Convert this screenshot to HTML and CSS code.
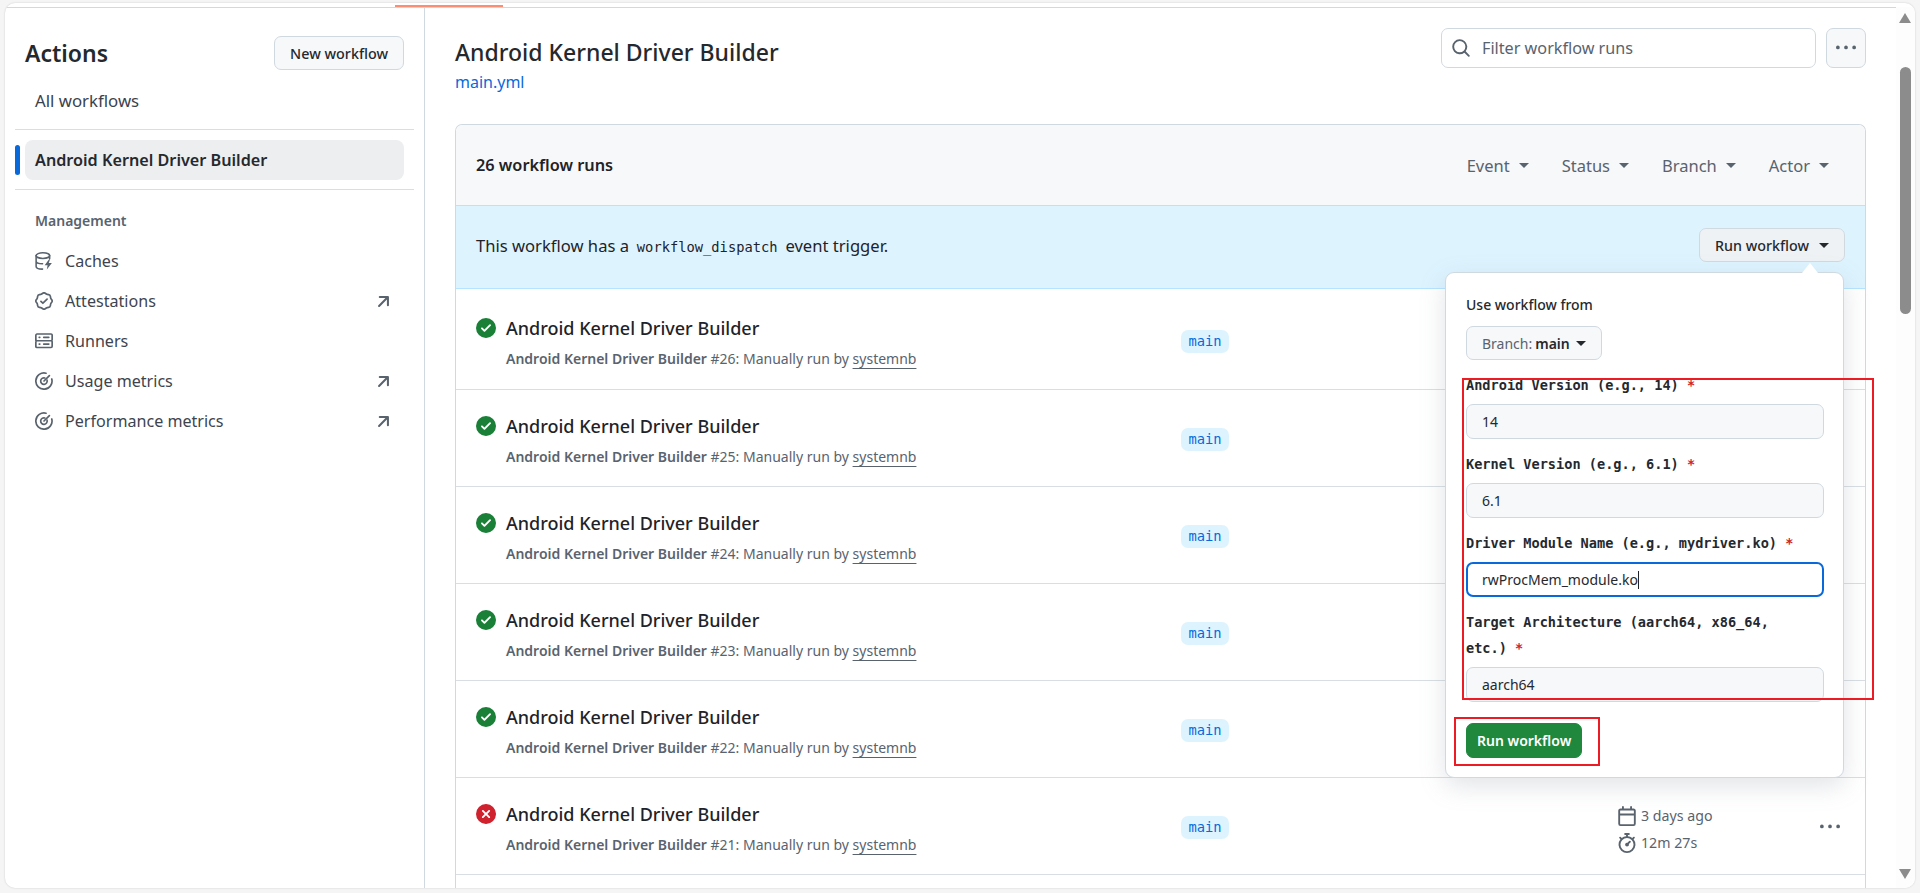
FILE: index.html
```html
<!DOCTYPE html>
<html lang="en">
<head>
<meta charset="utf-8">
<title>Android Kernel Driver Builder</title>
<link rel="stylesheet" href="styles.css">
</head>
<body>
<svg class="sprite" width="0" height="0" aria-hidden="true">
  <symbol id="i-search" viewBox="0 0 16 16"><path d="M10.68 11.74a6 6 0 0 1-7.922-8.982 6 6 0 0 1 8.982 7.922l3.04 3.04a.749.749 0 0 1-.326 1.275.749.749 0 0 1-.734-.215ZM11.5 7a4.499 4.499 0 1 0-8.997 0A4.499 4.499 0 0 0 11.5 7Z"/></symbol>
  <symbol id="i-kebab" viewBox="0 0 16 16"><path d="M8 9a1.500 1.500 0 1 0 0-3 1.500 1.500 0 0 0 0 3ZM1.500 9a1.500 1.500 0 1 0 0-3 1.500 1.500 0 0 0 0 3Zm13 0a1.500 1.500 0 1 0 0-3 1.500 1.500 0 0 0 0 3Z"/></symbol>
  <symbol id="i-ok" viewBox="0 0 16 16"><path d="M8 16A8 8 0 1 1 8 0a8 8 0 0 1 0 16Zm3.78-9.72a.751.751 0 0 0-.018-1.042.751.751 0 0 0-1.042-.018L6.75 9.19 5.28 7.72a.751.751 0 0 0-1.042.018.751.751 0 0 0-.018 1.042l2 2a.75.75 0 0 0 1.06 0Z"/></symbol>
  <symbol id="i-fail" viewBox="0 0 16 16"><path d="M2.343 13.657A8 8 0 1 1 13.658 2.343 8 8 0 0 1 2.343 13.657ZM6.03 4.97a.751.751 0 0 0-1.042.018.751.751 0 0 0-.018 1.042L6.94 8 4.97 9.97a.749.749 0 0 0 .326 1.275.749.749 0 0 0 .734-.215L8 9.06l1.97 1.97a.749.749 0 0 0 1.275-.326.749.749 0 0 0-.215-.734L9.06 8l1.97-1.97a.749.749 0 0 0-.326-1.275.749.749 0 0 0-.734.215L8 6.94Z"/></symbol>
  <symbol id="i-cal" viewBox="0 0 16 16"><path d="M4.75 0a.75.75 0 0 1 .75.75V2h5V.75a.75.75 0 0 1 1.5 0V2h1.25c.966 0 1.75.784 1.75 1.75v10.5A1.75 1.75 0 0 1 13.25 16H2.75A1.75 1.75 0 0 1 1 14.25V3.75C1 2.784 1.784 2 2.75 2H4V.75A.75.75 0 0 1 4.75 0ZM2.5 7.5v6.75c0 .138.112.25.25.25h10.5a.25.25 0 0 0 .25-.25V7.5Zm10.75-4H2.75a.25.25 0 0 0-.25.25V6h11V3.75a.25.25 0 0 0-.25-.25Z"/></symbol>
  <symbol id="i-watch" viewBox="0 0 16 16"><path d="M5.75.75A.75.75 0 0 1 6.5 0h3a.75.75 0 0 1 0 1.5h-.75v1l-.001.041a6.724 6.724 0 0 1 3.464 1.435l.007-.006.75-.75a.749.749 0 0 1 1.275.326.749.749 0 0 1-.215.734l-.75.75-.006.007a6.75 6.75 0 1 1-10.548 0L2.72 5.03l-.75-.75a.751.751 0 0 1 .018-1.042.751.751 0 0 1 1.042-.018l.75.75.007.006A6.72 6.72 0 0 1 7.25 2.541V1.5H6.5a.75.75 0 0 1-.75-.75ZM8 14.5a5.25 5.25 0 1 0-.001-10.501A5.25 5.25 0 0 0 8 14.5Zm.389-6.7 1.33-1.33a.75.75 0 1 1 1.061 1.06L9.45 8.861A1.503 1.503 0 0 1 8 10.75a1.499 1.499 0 1 1 .389-2.95Z"/></symbol>
  <symbol id="i-ext" viewBox="2.5 2.5 11 11"><path d="M4.53 4.75A.75.75 0 0 1 5.25 4h6a.75.75 0 0 1 .75.75v6a.75.75 0 0 1-1.5 0V6.56l-5.22 5.22a.749.749 0 0 1-1.275-.326.749.749 0 0 1 .215-.734L9.44 5.5H5.25a.75.75 0 0 1-.72-.75Z"/></symbol>
  <symbol id="i-server" viewBox="0 0 16 16"><path d="M1.75 1h12.5c.966 0 1.75.784 1.75 1.75v4c0 .372-.116.717-.314 1 .198.283.314.628.314 1v4a1.75 1.75 0 0 1-1.75 1.75H1.75A1.75 1.75 0 0 1 0 13.25v-4c0-.372.116-.717.314-1a1.739 1.739 0 0 1-.314-1v-4C0 1.784.784 1 1.75 1ZM1.5 2.75v4c0 .138.112.25.25.25h12.5a.25.25 0 0 0 .25-.25v-4a.25.25 0 0 0-.25-.25H1.75a.25.25 0 0 0-.25.25Zm.25 5.75a.25.25 0 0 0-.25.25v4c0 .138.112.25.25.25h12.5a.25.25 0 0 0 .25-.25v-4a.25.25 0 0 0-.25-.25ZM7 4.75A.75.75 0 0 1 7.75 4h4.5a.75.75 0 0 1 0 1.5h-4.5A.75.75 0 0 1 7 4.75ZM7.75 10h4.5a.75.75 0 0 1 0 1.5h-4.5a.75.75 0 0 1 0-1.5ZM3 4.75A.75.75 0 0 1 3.75 4h.5a.75.75 0 0 1 0 1.5h-.5A.75.75 0 0 1 3 4.75ZM3.75 10h.5a.75.75 0 0 1 0 1.5h-.5a.75.75 0 0 1 0-1.5Z"/></symbol>
  <symbol id="i-verified" viewBox="0 0 16 16"><path d="m9.585.52.929.68c.153.112.331.186.518.215l1.138.175a2.678 2.678 0 0 1 2.24 2.24l.174 1.139c.029.187.103.365.215.518l.68.928a2.677 2.677 0 0 1 0 3.17l-.68.928a1.174 1.174 0 0 0-.215.518l-.175 1.138a2.678 2.678 0 0 1-2.241 2.241l-1.138.175a1.17 1.17 0 0 0-.518.215l-.928.68a2.677 2.677 0 0 1-3.17 0l-.928-.68a1.174 1.174 0 0 0-.518-.215L3.83 14.41a2.678 2.678 0 0 1-2.24-2.24l-.175-1.138a1.17 1.17 0 0 0-.215-.518l-.68-.928a2.677 2.677 0 0 1 0-3.17l.68-.928c.112-.153.186-.331.215-.518l.175-1.14a2.678 2.678 0 0 1 2.24-2.24l1.139-.175c.187-.029.365-.103.518-.215l.928-.68a2.677 2.677 0 0 1 3.17 0ZM7.303 1.728l-.927.68a2.67 2.67 0 0 1-1.18.489l-1.137.174a1.179 1.179 0 0 0-.987.987l-.174 1.136a2.677 2.677 0 0 1-.489 1.18l-.68.928a1.18 1.18 0 0 0 0 1.394l.68.927c.256.348.424.753.489 1.18l.174 1.137c.078.509.478.909.987.987l1.136.174a2.67 2.67 0 0 1 1.18.489l.928.68c.414.305.979.305 1.394 0l.927-.68a2.67 2.67 0 0 1 1.18-.489l1.137-.174a1.18 1.18 0 0 0 .987-.987l.174-1.136a2.67 2.67 0 0 1 .489-1.18l.68-.928a1.176 1.176 0 0 0 0-1.394l-.68-.927a2.686 2.686 0 0 1-.489-1.18l-.174-1.137a1.179 1.179 0 0 0-.987-.987l-1.136-.174a2.677 2.677 0 0 1-1.18-.489l-.928-.68a1.176 1.176 0 0 0-1.394 0ZM11.28 6.78l-3.75 3.75a.75.75 0 0 1-1.06 0L4.72 8.78a.751.751 0 0 1 .018-1.042.751.751 0 0 1 1.042-.018l1.22 1.22 3.22-3.22a.751.751 0 0 1 1.042.018.751.751 0 0 1 .018 1.042Z"/></symbol>
  <symbol id="i-meter" viewBox="0 0 16 16"><g fill="none" stroke="currentColor" stroke-width="1.5" stroke-linecap="round"><path d="M14.9 6.200A7.200 7.200 0 1 1 9.800 1.100"/><path d="M10.700 7.200A2.900 2.900 0 1 1 8.800 5.300"/><path d="M8 8l4.800-4.800"/></g></symbol>
  <symbol id="i-cache" viewBox="0 0 16 16"><g fill="none" stroke="currentColor" stroke-width="1.4" stroke-linecap="round" stroke-linejoin="round"><ellipse cx="7" cy="3.200" rx="6" ry="2.500"/><path d="M1 3.200v9.600c0 1.400 2.500 2.400 5.700 2.400M1 8c0 1.400 2.500 2.500 5.700 2.500M13 3.200v2.800"/></g><path d="M12.500 6.500 8.600 11.800h2.600l-.7 3.700 4.500-5.800h-2.800l1.200-3.200Z"/></symbol>
</svg>

<div class="window">
  <span class="tab-mark"></span>
  <aside class="sidebar">
    <div class="side-head">
      <h2 class="side-title">Actions</h2>
      <button class="btn new-btn">New workflow</button>
    </div>
    <a class="side-all">All workflows</a>
    <div class="side-active-wrap">
      <span class="side-bar"></span>
      <a class="side-active">Android Kernel Driver Builder</a>
    </div>
    <h3 class="side-group">Management</h3>
    <nav class="side-nav">
      <a class="side-item"><svg class="ico"><use href="#i-cache"/></svg><span>Caches</span></a>
      <a class="side-item"><svg class="ico"><use href="#i-verified"/></svg><span>Attestations</span><svg class="ext"><use href="#i-ext"/></svg></a>
      <a class="side-item"><svg class="ico"><use href="#i-server"/></svg><span>Runners</span></a>
      <a class="side-item"><svg class="ico"><use href="#i-meter"/></svg><span>Usage metrics</span><svg class="ext"><use href="#i-ext"/></svg></a>
      <a class="side-item"><svg class="ico"><use href="#i-meter"/></svg><span>Performance metrics</span><svg class="ext"><use href="#i-ext"/></svg></a>
    </nav>
  </aside>

  <main class="main">
    <header class="page-head">
      <div class="page-titles">
        <h1 class="page-title">Android Kernel Driver Builder</h1>
        <a class="page-file">main.yml</a>
      </div>
      <div class="search">
        <svg class="search-ico"><use href="#i-search"/></svg>
        <span class="search-ph">Filter workflow runs</span>
      </div>
      <button class="btn more-btn"><svg class="kebab"><use href="#i-kebab"/></svg></button>
    </header>

    <section class="card">
      <div class="card-head">
        <strong class="run-count">26 workflow runs</strong>
        <div class="filters">
          <span class="filter">Event<i class="caret"></i></span>
          <span class="filter">Status<i class="caret"></i></span>
          <span class="filter">Branch<i class="caret"></i></span>
          <span class="filter">Actor<i class="caret"></i></span>
        </div>
      </div>
      <div class="banner">
        <p class="banner-text">This workflow has a <code class="banner-code">workflow_dispatch</code> event trigger.</p>
        <button class="btn run-btn">Run workflow<i class="caret dark"></i></button>
      </div>

      <div class="row first">
        <div class="row-main">
          <div class="row-title"><svg class="status ok"><use href="#i-ok"/></svg>Android Kernel Driver Builder</div>
          <div class="row-sub"><b>Android Kernel Driver Builder</b> #26: Manually run by <u>systemnb</u></div>
        </div>
        <div class="row-branch"><span class="pill">main</span></div>
      </div>
      <div class="row">
        <div class="row-main">
          <div class="row-title"><svg class="status ok"><use href="#i-ok"/></svg>Android Kernel Driver Builder</div>
          <div class="row-sub"><b>Android Kernel Driver Builder</b> #25: Manually run by <u>systemnb</u></div>
        </div>
        <div class="row-branch"><span class="pill">main</span></div>
      </div>
      <div class="row">
        <div class="row-main">
          <div class="row-title"><svg class="status ok"><use href="#i-ok"/></svg>Android Kernel Driver Builder</div>
          <div class="row-sub"><b>Android Kernel Driver Builder</b> #24: Manually run by <u>systemnb</u></div>
        </div>
        <div class="row-branch"><span class="pill">main</span></div>
      </div>
      <div class="row">
        <div class="row-main">
          <div class="row-title"><svg class="status ok"><use href="#i-ok"/></svg>Android Kernel Driver Builder</div>
          <div class="row-sub"><b>Android Kernel Driver Builder</b> #23: Manually run by <u>systemnb</u></div>
        </div>
        <div class="row-branch"><span class="pill">main</span></div>
      </div>
      <div class="row">
        <div class="row-main">
          <div class="row-title"><svg class="status ok"><use href="#i-ok"/></svg>Android Kernel Driver Builder</div>
          <div class="row-sub"><b>Android Kernel Driver Builder</b> #22: Manually run by <u>systemnb</u></div>
        </div>
        <div class="row-branch"><span class="pill">main</span></div>
      </div>
      <div class="row">
        <div class="row-main">
          <div class="row-title"><svg class="status fail"><use href="#i-fail"/></svg>Android Kernel Driver Builder</div>
          <div class="row-sub"><b>Android Kernel Driver Builder</b> #21: Manually run by <u>systemnb</u></div>
        </div>
        <div class="row-branch"><span class="pill">main</span></div>
        <div class="row-meta">
          <span class="meta-line"><svg class="meta-ico"><use href="#i-cal"/></svg>3 days ago</span>
          <span class="meta-line"><svg class="meta-ico"><use href="#i-watch"/></svg>12m 27s</span>
        </div>
        <svg class="row-more"><use href="#i-kebab"/></svg>
      </div>
      <div class="row"></div>

      <div class="popover">
        <i class="pop-arrow"></i>
        <div class="pop-from">Use workflow from</div>
        <button class="btn branch-btn">Branch: <b>main</b><i class="caret dark"></i></button>
        <div class="pop-form">
          <label class="f-label">Android Version (e.g., 14) <em>*</em></label>
          <div class="f-input">14</div>
          <label class="f-label">Kernel Version (e.g., 6.1) <em>*</em></label>
          <div class="f-input">6.1</div>
          <label class="f-label">Driver Module Name (e.g., mydriver.ko) <em>*</em></label>
          <div class="f-input focus">rwProcMem_module.ko<span class="text-caret"></span></div>
          <label class="f-label"><span class="f-line">Target Architecture (aarch64, x86_64,</span><span class="f-line">etc.) <em>*</em></span></label>
          <div class="f-input">aarch64</div>
        </div>
        <button class="btn go-btn">Run workflow</button>
      </div>
    </section>
    <span class="mark mark-form"></span>
    <span class="mark mark-run"></span>
  </main>

  <div class="scrollbar">
    <i class="sb-up"></i>
    <span class="sb-thumb"></span>
    <i class="sb-down"></i>
  </div>
</div>
</body>
</html>
```

FILE: styles.css
```css
* { box-sizing: border-box; }
html, body { margin: 0; height: 100%; overflow: hidden; }
body {
  background: #f5f5f5;
  font-family: "Noto Sans", "Open Sans", "Liberation Sans", sans-serif;
  color: #1f2328;
  padding: 3px 5px 5px;
}
.sprite { position: absolute; }
svg { fill: currentColor; display: block; }
h1, h2, h3, p { margin: 0; }
u { text-decoration-color: #59636e; text-underline-offset: 4px; }

.window {
  position: relative;
  height: 885px;
  display: flex;
  background: #fff;
  border-radius: 10px;
  overflow: hidden;
  box-shadow: 0 0 2px rgba(0, 0, 0, .18);
  padding-top: 4px;
}
.tab-mark {
  position: absolute;
  left: 390px;
  top: 2px;
  width: 108px;
  height: 2px;
  background: #fd8c73;
}

.btn {
  font: inherit;
  border: 1px solid #d1d9e0;
  background: #f6f8fa;
  border-radius: 7px;
  color: #25292e;
  font-weight: 500;
  display: inline-flex;
  align-items: center;
}
.ico { width: 18px; height: 18px; flex: none; }
.caret {
  display: inline-block;
  width: 0;
  height: 0;
  border: 5px solid transparent;
  border-top: 5px solid #59636e;
  border-bottom: 0;
}
.caret.dark { border-top-color: #25292e; }

/* Sidebar */
.sidebar {
  width: 420px;
  flex: none;
  border-top: 1px solid #d1d9e0;
  border-right: 1px solid #d1d9e0;
  padding: 24px 10px 0;
  color: #25292e;
}
.side-head {
  display: flex;
  justify-content: space-between;
  align-items: center;
  padding: 0 10px;
  height: 42px;
}
.side-title { font-size: 23px; font-weight: 600; line-height: 1; }
.new-btn { height: 34px; padding: 0 15px; font-size: 14.350px; }
.side-all {
  display: flex;
  align-items: center;
  height: 40px;
  padding: 0 20px;
  margin-top: 6px;
  font-size: 16.800px;
  color: #3a424b;
}
.side-active-wrap {
  position: relative;
  margin-top: 9px;
  padding: 10px 0 9px 10px;
  border-top: 1px solid #d8dee4;
  border-bottom: 1px solid #d8dee4;
}
.side-bar {
  position: absolute;
  left: 0;
  top: 15px;
  width: 5px;
  height: 30px;
  border-radius: 3px;
  background: #0969da;
}
.side-active {
  display: flex;
  align-items: center;
  height: 40px;
  width: 379px;
  padding: 0 10px;
  background: #eceef0;
  border-radius: 8px;
  font-size: 16.200px;
  font-weight: 600;
  color: #25292e;
}
.side-group {
  margin-top: 21px;
  padding-left: 20px;
  font-size: 14px;
  line-height: 20px;
  font-weight: 600;
  color: #59636e;
}
.side-nav { margin-top: 10px; }
.side-item {
  display: flex;
  align-items: center;
  gap: 12px;
  height: 40px;
  padding: 0 20px;
  font-size: 16.100px;
  color: #3d444d;
}
.side-item .ico { color: #59636e; }
.ext { width: 15px; height: 15px; margin-left: auto; margin-right: 3px; color: #59636e; }

/* Main */
.main {
  position: relative;
  flex: 1;
  min-width: 0;
  border-top: 1px solid #d1d9e0;
  padding: 20px 30px 0 30px;
  overflow: hidden;
}
.page-head {
  display: flex;
  align-items: flex-start;
  height: 96px;
}
.page-titles { flex: 1; margin-top: 9px; }
.page-title { font-size: 23px; font-weight: 500; line-height: 30px; color: #25292e; }
.page-file { display: block; font-size: 16px; line-height: 24px; margin-top: 3px; color: #0969da; }
.search {
  width: 375px;
  height: 40px;
  border: 1px solid #d1d9e0;
  border-radius: 7px;
  display: flex;
  align-items: center;
  padding: 0 9px;
  gap: 11px;
  color: #59636e;
}
.search-ico { width: 20px; height: 20px; flex: none; }
.search-ph { font-size: 16.200px; color: #59636e; }
.more-btn {
  width: 40px;
  height: 40px;
  margin-left: 10px;
  justify-content: center;
  padding: 0;
  color: #59636e;
}
.kebab { width: 20px; height: 20px; }

.card {
  position: relative;
  border: 1px solid #d1d9e0;
  border-radius: 7px 7px 0 0;
  border-bottom: 0;
}
.card-head {
  display: flex;
  justify-content: space-between;
  align-items: center;
  height: 80px;
  padding: 0 36px 0 20px;
  background: #f6f8fa;
  border-radius: 7px 7px 0 0;
}
.run-count { font-size: 16.300px; font-weight: 600; color: #1f2328; }
.filters { display: flex; gap: 33px; }
.filter {
  display: inline-flex;
  align-items: center;
  gap: 9px;
  font-size: 16.500px;
  color: #59636e;
}
.banner {
  display: flex;
  justify-content: space-between;
  align-items: center;
  height: 84px;
  padding: 0 20px 4px;
  background: #ddf4ff;
  border-top: 1px solid #b6e3ff;
  border-bottom: 1px solid #b6e3ff;
}
.banner-text { font-size: 16.600px; color: #1f2328; }
.banner-code {
  font-family: "DejaVu Sans Mono", "Liberation Mono", monospace;
  font-size: 13.750px;
  padding: 0 3.500px;
}
.run-btn {
  height: 34px;
  gap: 10px;
  padding: 0 15px;
  font-size: 14.300px;
  background: #eff2f5;
}

.row {
  display: grid;
  grid-template-columns: 705px 436px 1fr 40px;
  align-items: center;
  height: 97px;
  padding: 4px 25px 0 20px;
  border-bottom: 1px solid #d8dee4;
}
.row.first { height: 101px; padding-top: 7px; }
.row-title {
  display: flex;
  align-items: center;
  gap: 10px;
  font-size: 18px;
  font-weight: 500;
  line-height: 24px;
  color: #1f2328;
}
.status { width: 20px; height: 20px; }
.status.ok { color: #1a7f37; }
.status.fail { color: #cf222e; }
.row-sub {
  margin-top: 9px;
  padding-left: 30px;
  font-size: 14px;
  line-height: 20px;
  color: #59636e;
}
.row-sub b { font-weight: 600; }
.row-branch { display: flex; }
.pill {
  font-family: "DejaVu Sans Mono", "Liberation Mono", monospace;
  font-size: 13.750px;
  line-height: 23px;
  padding: 0 7.500px;
  margin-bottom: 2px;
  background: #ddf4ff;
  color: #0969da;
  border-radius: 7px;
}
.row-meta { display: flex; flex-direction: column; gap: 9px; padding-top: 2px; }
.meta-line {
  display: flex;
  align-items: center;
  gap: 4px;
  font-size: 14.200px;
  line-height: 18px;
  color: #59636e;
}
.meta-ico { width: 20px; height: 20px; flex: none; margin: -1px 0; }
.row-more { width: 20px; height: 20px; margin-bottom: 3px; color: #59636e; justify-self: end; }

/* Popover */
.popover {
  position: absolute;
  left: 989px;
  top: 147px;
  width: 399px;
  height: 506px;
  background: #fff;
  border: 1px solid #d1d9e0;
  border-radius: 9px;
  box-shadow: 0 8px 24px rgba(140, 149, 159, .25);
  padding: 16px 20px 0;
  z-index: 2;
}
.pop-arrow {
  position: absolute;
  right: 25px;
  top: -10px;
  border: 8px solid transparent;
  border-top: 0;
  border-bottom: 10px solid #fff;
}
.pop-from { font-size: 14px; font-weight: 500; line-height: 32px; color: #25292e; }
.branch-btn {
  height: 34px;
  margin-top: 5px;
  padding: 0 15px;
  gap: 6px;
  font-size: 14px;
  font-weight: 400;
  color: #59636e;
}
.branch-btn b { font-weight: 600; color: #25292e; margin-left: -3px; }
.pop-form {
  height: 326px;
  margin-top: 17px;
  overflow: hidden;
  display: flex;
  flex-direction: column;
  width: 358px;
}
.f-label {
  font-family: "DejaVu Sans Mono", "Liberation Mono", monospace;
  font-weight: 700;
  font-size: 13.600px;
  line-height: 26px;
  margin-top: -5px;
  margin-bottom: 6px;
  color: #25292e;
}
.f-line { display: block; }
.f-input + .f-label { margin-top: 12px; }
.f-label em { color: #cf222e; font-style: normal; }
.f-input {
  flex: none;
  height: 35px;
  padding: 0 15px;
  display: flex;
  align-items: center;
  font-size: 14px;
  background: #f6f8fa;
  border: 1px solid #d1d9e0;
  border-radius: 7px;
  color: #25292e;
}
.f-input.focus { background: #fff; border: 2px solid #0969da; padding: 0 14px; }
.text-caret { width: 1px; height: 18px; background: #1f2328; }
.go-btn {
  height: 35px;
  margin-top: 20px;
  padding: 0 10px;
  background: #1f883d;
  border-color: #1f883d;
  color: #fff;
  font-size: 14px;
  font-weight: 600;
}

/* Annotation rectangles */
.mark { position: absolute; border: 2px solid #ed1c24; z-index: 3; }
.mark-form { left: 1037px; top: 370px; width: 412px; height: 322px; }
.mark-run { left: 1029px; top: 709px; width: 146px; height: 49px; }

/* Scrollbar */
.scrollbar {
  position: relative;
  width: 19px;
  flex: none;
  background: #fdfdfd;
}
.sb-up, .sb-down {
  position: absolute;
  left: 3px;
  border: 6px solid transparent;
}
.sb-up { top: 6px; border-top: 0; border-bottom: 10px solid #8c8c8c; }
.sb-down { bottom: 9px; border-bottom: 0; border-top: 10px solid #8c8c8c; }
.sb-thumb {
  position: absolute;
  left: 4px;
  top: 60px;
  width: 11px;
  height: 247px;
  border-radius: 6px;
  background: #8c8c8c;
}
```
